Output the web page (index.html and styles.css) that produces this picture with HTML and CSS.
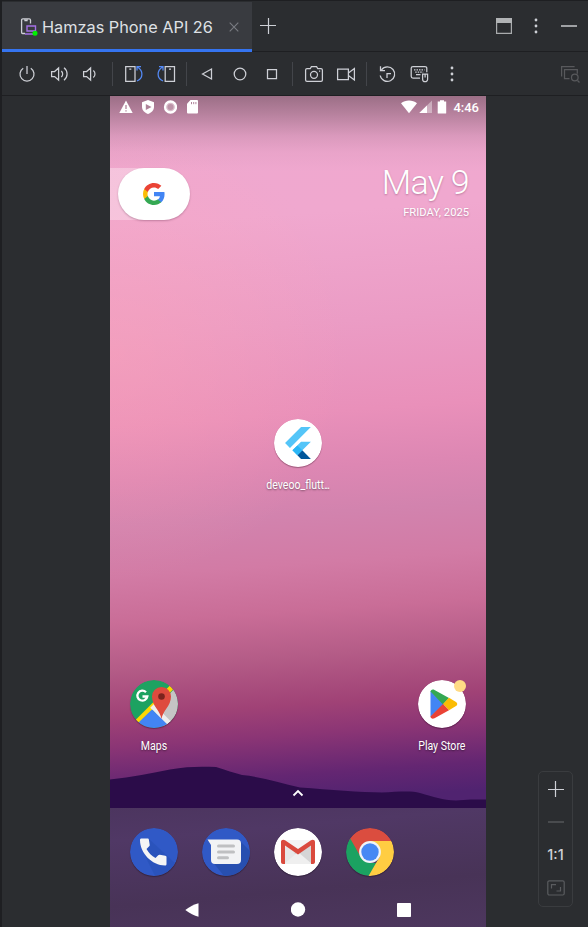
FILE: index.html
```html
<!DOCTYPE html>
<html lang="en">
<head>
<meta charset="utf-8">
<title>Running Devices</title>
<link rel="stylesheet" href="styles.css">
</head>
<body>
<div class="window">
  <header class="tabs">
    <div class="tab">
      <svg class="tab-icon" width="18" height="20" viewBox="0 0 18 20" fill="none"><path d="M5 16.500H2.600a1 1 0 0 1-1-1V3a1.200 1.200 0 0 1 1.200-1.200h6.500A1.200 1.200 0 0 1 10.500 3v3.500M5 2v1.700h2V2" stroke="#ced0d6" stroke-width="1.300"/><path d="M7 9h8.500v5H7zM5 17h8.500" stroke="#a571e6" stroke-width="1.400"/><circle cx="15" cy="16.300" r="2.500" fill="#00f200"/></svg>
      <span class="tab-title">Hamzas Phone API 26</span>
      <svg class="close" width="10" height="10" viewBox="0 0 10 10"><path d="M.7.7l8.600 8.600M9.300.7L.7 9.300" stroke="#7a7c82" stroke-width="1.100"/></svg>
    </div>
    <svg class="add" width="16" height="16" viewBox="0 0 16 16"><path d="M8.500 0v16M0 7.500h16" stroke="#ced0d6" stroke-width="1.200"/></svg>
    <div class="tab-tools">
      <svg width="16" height="16" viewBox="0 0 16 16"><path d="M.6.6h14.800v14.800H.6z" fill="none" stroke="#a9abad" stroke-width="1.200"/><path d="M0 0h16v5H0z" fill="#b1b3b5"/></svg>
      <svg width="4" height="16" viewBox="0 0 4 16" fill="#ced0d6"><circle cx="2" cy="2" r="1.400"/><circle cx="2" cy="8" r="1.400"/><circle cx="2" cy="14" r="1.400"/></svg>
      <svg width="16" height="16" viewBox="0 0 16 16"><path d="M0 8h16" stroke="#9fa1a4" stroke-width="2"/></svg>
    </div>
  </header>

  <nav class="toolbar">
    <svg class="tool" viewBox="0 0 24 24"><path d="M12 4v8M8.200 6.200a7 7 0 1 0 7.600 0"/></svg>
    <svg class="tool" viewBox="0 0 24 24"><path d="M4.600 9.500h3l4-3.500v12l-4-3.500h-3zM14.300 9a4 4 0 0 1 0 6M17 5.800a7.800 7.800 0 0 1 0 12.400"/></svg>
    <svg class="tool" viewBox="0 0 24 24"><path d="M4.600 9.500h3l4-3.500v12l-4-3.500h-3zM14.300 8.500a4.500 4.500 0 0 1 0 7"/></svg>
    <i class="sep"></i>
    <svg class="tool" viewBox="0 0 24 24"><path d="M3.700 4.600h9.300v14.800H3.700zM7.300 7h2"/><path class="blue" d="M15 19C21.500 16 21.500 8.500 15.200 5M19 4.600h-4v4"/></svg>
    <svg class="tool" viewBox="0 0 24 24"><path d="M11.200 4.600h9.300v14.800h-9.300zM15 7h2"/><path class="blue" d="M9 19C2.500 16 2.500 8.500 8.800 5M5 4.600h4v4"/></svg>
    <i class="sep narrow"></i>
    <svg class="tool" viewBox="0 0 24 24"><path d="M7.500 12l9-5v10z"/></svg>
    <svg class="tool" viewBox="0 0 24 24"><circle cx="13" cy="12" r="5.800"/></svg>
    <svg class="tool" viewBox="0 0 24 24"><path d="M8.500 7.500h9v9h-9z"/></svg>
    <i class="sep"></i>
    <svg class="tool" viewBox="0 0 24 24"><path d="M5 6.700h3.200l1.200-2h5.200l1.200 2H19A1.400 1.400 0 0 1 20.400 8v10a1.400 1.400 0 0 1-1.400 1.400H5A1.400 1.400 0 0 1 3.600 18V8A1.400 1.400 0 0 1 5 6.700z"/><circle cx="12" cy="12.800" r="3.500"/><path d="M17 9h1.200"/></svg>
    <svg class="tool" viewBox="0 0 24 24"><path d="M3.600 7h10.800v10.500H3.600zM14.400 11l6-4.500v11.500l-6-4.500"/></svg>
    <i class="sep narrow"></i>
    <svg class="tool" viewBox="0 0 24 24"><path d="M6.500 7.800a7.300 7.300 0 1 1-1.300 5.700M5.500 4.200v4.500h4.500M12 16v-4.400h4"/></svg>
    <svg class="tool" viewBox="0 0 24 24"><path d="M13 16H6a1.800 1.800 0 0 1-1.800-1.800V6.300A1.800 1.800 0 0 1 6 4.500h12a1.800 1.800 0 0 1 1.800 1.800v4"/><path stroke-dasharray="1.500 1" d="M7 7.800h10.500M8.200 10h8"/><path d="M9 12.700h4.500M15.600 12.200h5v5a2.500 2.500 0 0 1-5 0zM18.100 12.500v3"/></svg>
    <svg class="tool" viewBox="0 0 24 24"><g fill="#ced0d6" stroke="none"><circle cx="13" cy="6" r="1.400"/><circle cx="13" cy="12" r="1.400"/><circle cx="13" cy="18" r="1.400"/></g></svg>
    <svg class="tool last" viewBox="0 0 24 24"><path d="M3.600 14.500v-10h13M11.500 16.500h-5v-9h12.800v4.200M19.500 18.500l2 2"/><circle cx="16.800" cy="15.500" r="3.300"/></svg>
  </nav>

  <main class="stage">
    <section class="phone">
      <svg class="hills" width="376" height="42" viewBox="0 0 376 42"><path fill="#2b0c49" d="M0 13.500C22 11 42 7 60 3.500 78 .2 92 .5 106 1c10 3 18 6 26 8 20 2 38 8 58 12.500 30 2 60 5 82 5 16-.5 28-2 38 .5 14 4 22 7 36 7.500 10-.9 20-.9 30-.9V42H0z"/></svg>
      <div class="status">
        <svg width="14" height="14" viewBox="0 0 14 14"><path fill="#fff" d="M7 .5l6.700 12.500H.3z"/><path d="M7 5v4M7 10.200v1.300" stroke="#b0849b" stroke-width="1.300"/></svg>
        <svg width="14" height="14" viewBox="0 0 14 14"><path fill="#fff" d="M7 0l6 2.200v4.600c0 3.400-2.500 6-6 7.200C3.500 12.800 1 10.200 1 6.800V2.200z"/><path fill="#ae8399" d="M4.800 4l5.700 3-5.700 3z"/></svg>
        <svg width="14" height="14" viewBox="0 0 14 14"><circle cx="7.500" cy="7" r="5.500" fill="#d8bdca" stroke="#fff" stroke-width="2.300"/><circle cx="7.500" cy="7" r="3" fill="#bd94a8"/></svg>
        <svg width="14" height="14" viewBox="0 0 14 14"><path fill="#fff" d="M5.500 0H12a1 1 0 0 1 1 1v11.500a1 1 0 0 1-1 1H3a1 1 0 0 1-1-1V3.800z"/><path d="M6.500 2v2.200M8.700 2v2.200M10.900 2v2.200" stroke="#b0849b"/></svg>
        <span class="grow"></span>
        <svg class="wifi" width="16" height="14" viewBox="0 0 16 14"><path fill="#fff" d="M0 3.200C4.500-.4 11.500-.4 16 3.200L8 13.200z"/></svg>
        <svg class="signal" width="13" height="14" viewBox="0 0 13 14"><path fill="#fff" opacity=".4" d="M13 .5V13H.3z"/><path fill="#fff" d="M8 5.500V13H.3z"/></svg>
        <svg class="battery" width="10" height="14" viewBox="0 0 10 14"><path fill="#fff" d="M3 .3h4v1.200h2.200V13a.6.6 0 0 1-.6.600H1.300a.6.6 0 0 1-.6-.6V1.500H3z"/></svg>
        <span class="clock">4:46</span>
      </div>

      <div class="widgets">
        <div class="search-tail"><div class="search">
          <svg width="24" height="24" viewBox="0 0 24 24"><path fill="#4285f4" d="M22.560 12.250c0-.78-.07-1.530-.2-2.250H12v4.260h5.920c-.26 1.370-1.040 2.530-2.210 3.310v2.770h3.570c2.080-1.920 3.280-4.740 3.280-8.090z"/><path fill="#34a853" d="M12 23c2.970 0 5.460-.98 7.280-2.660l-3.570-2.770c-.98.66-2.230 1.060-3.710 1.060-2.860 0-5.290-1.930-6.160-4.530H2.180v2.840C3.990 20.530 7.700 23 12 23z"/><path fill="#fbbc05" d="M5.840 14.090c-.22-.66-.35-1.360-.35-2.090s.13-1.430.35-2.090V7.070H2.180C1.430 8.550 1 10.220 1 12s.43 3.450 1.180 4.930l2.850-2.220.81-.62z"/><path fill="#ea4335" d="M12 5.380c1.620 0 3.060.56 4.210 1.640l3.150-3.150C17.450 2.090 14.970 1 12 1 7.700 1 3.990 3.470 2.180 7.070l3.660 2.840c.87-2.600 3.300-4.530 6.160-4.530z"/></svg>
        </div></div>
        <div class="date"><div class="day">May 9</div><div class="weekday">FRIDAY, 2025</div></div>
      </div>

      <div class="apps center">
        <div class="app">
          <svg class="icon" viewBox="0 0 48 48"><circle cx="24" cy="24" r="24" fill="#fff"/><g transform="translate(8 8) scale(1.330)"><path fill="#54c5f8" d="M14.314 0L2.300 12 6 15.700 21.684 0zM14.328 11.072L7.857 17.530l3.700 3.700L21.700 11.072z"/><path fill="#01579b" d="M11.557 21.230L14.327 24H21.700l-6.460-6.468z"/><path fill="#29b6f6" d="M7.857 17.530l3.700-3.700 3.683 3.702-3.683 3.700z"/></g></svg>
          <span class="label">deveoo_flutt<span class="dots">...</span></span>
        </div>
      </div>

      <div class="apps lower">
        <div class="app">
          <svg class="icon" viewBox="0 0 48 48"><defs><clipPath id="disc"><circle cx="24" cy="24" r="24"/></clipPath></defs><g clip-path="url(#disc)"><path fill="#1da261" d="M0 0h48v48H0z"/><path fill="#c5c5c5" d="M48 5v43H34L24 30z"/><path d="M4 45L44 5" stroke="#fdd900" stroke-width="5"/><path d="M22 26l20 20" stroke="#eee" stroke-width="5"/><path fill="#4285f4" d="M8 43l14-13.500L40 47v3H8z"/></g><path fill="none" stroke="#fff" stroke-width="2.300" d="M16 12.200a5 5 0 1 0 1.300 4.300H12.500"/><path fill="#de4b3e" d="M31.500 39c-1-8-9.500-13-9.500-22.500a9.500 9.500 0 0 1 19 0C41 26 32.500 31 31.500 39z"/><circle cx="31.500" cy="16.500" r="3.300" fill="#7b231d"/></svg>
          <span class="label">Maps</span>
        </div>
        <div class="app">
          <svg class="icon" viewBox="0 0 48 48"><circle cx="24" cy="24" r="24" fill="#fff"/><path fill="#4285f4" d="M12.500 11v26L26 24z"/><path fill="#34a853" d="M12.500 12c0-2.200 2-3.200 4-2.100L31 18l-6 6.500L12.500 11.500z"/><path fill="#fbbc04" d="M31 17.800l7 4.100c1.700 1 1.700 3.200 0 4.200l-7 4.100-6-6.200z"/><path fill="#ea4335" d="M12.500 36.500L25 24l6 6.200-14.500 8c-2 1.100-4 .1-4-1.700z"/></svg><i class="badge"></i>
          <span class="label">Play Store</span>
        </div>
      </div>

      <svg class="chevron" width="12" height="8" viewBox="0 0 12 8"><path d="M1.500 6.500L6 2l4.500 4.500" fill="none" stroke="#fff" stroke-width="1.800"/></svg>

      <div class="dock">
        <div class="favorites">
          <svg class="icon" viewBox="0 0 48 48"><circle cx="24" cy="24" r="24" fill="#3059c6"/><path fill="#2750b5" d="M19 11l27 25c-4 7-11 12-21 12L15 28z" opacity=".6" clip-path="url(#disc)"/><path fill="#f5f5f5" d="M10 12c0-1 .5-1.500 1.500-1.500h6c.8 0 1.300.4 1.400 1.200l.8 5c.1.700-.1 1.200-.5 1.600l-2.700 2.700c2.300 4 5 6.700 9 9l2.700-2.700c.4-.4 1-.6 1.600-.5l5.500.9c.8.100 1.200.6 1.200 1.400V36c0 1-.6 1.500-1.500 1.500C22 37.500 10 25 10 12z"/></svg>
          <svg class="icon" viewBox="0 0 48 48"><circle cx="24" cy="24" r="24" fill="#3059c6"/><path fill="#244ca8" clip-path="url(#disc)" d="M38 13l10 10v25H22L10 33z" opacity=".75"/><path fill="#f2f3f5" d="M5.500 11.500H35a4 4 0 0 1 4 4V32a4 4 0 0 1-4 4H13a4 4 0 0 1-4-4V17z"/><path d="M16.500 18h15M16.500 24h15M16.500 29.700h9" stroke="#bfc0c2" stroke-width="3" stroke-linecap="round"/></svg>
          <svg class="icon" viewBox="0 0 48 48"><circle cx="24" cy="24" r="24" fill="#fff"/><path fill="#e7e7e8" d="M8 12h32v24H8z"/><path fill="#d5d5d6" d="M40 14v22H31L20 25z"/><path fill="#efefef" d="M10 36l14-12 14 12z"/><path fill="#f4f4f4" d="M10 12h28L24 22z"/><path fill="#da4a3e" d="M7 14c0-2.200 2.200-3 4-1.800L24 21l13-8.800c1.800-1.200 4-.4 4 1.800v20c0 1.200-.8 2-2 2h-2V17.500L24 26.500l-13-9V36H9c-1.200 0-2-.8-2-2z"/></svg>
          <svg class="icon" viewBox="0 0 48 48"><g clip-path="url(#disc)"><path fill="#db4d3f" d="M0 0h48v13.500H24L14 30 3 12z"/><path fill="#1ba261" d="M0 8l4.500 3L15 29.500 24 35h6.500L22.500 49H0z"/><path fill="#ffcd42" d="M24 13h24v35H22.500l11-19z"/></g><circle cx="24" cy="24" r="10.900" fill="#f2f4f7"/><circle cx="24" cy="24" r="8.700" fill="#4688f4"/></svg>
        </div>
        <div class="nav">
          <svg width="14" height="14" viewBox="0 0 14 14"><path fill="#fff" d="M13.500.3v13.500c-4-1-9-3.500-13.200-6.700C4.500 3.800 9.500 1 13.500.300z"/></svg>
          <svg width="15" height="15" viewBox="0 0 15 15"><circle cx="7" cy="7.500" r="7.200" fill="#fff"/></svg>
          <svg width="14" height="14" viewBox="0 0 14 14"><rect width="14" height="14" rx=".8" fill="#fff"/></svg>
        </div>
      </div>
    </section>

    <aside class="zoom">
      <svg width="16" height="16" viewBox="0 0 16 16"><path d="M7.500 0v16M0 8.500h16" stroke="#ced0d6" stroke-width="1.200"/></svg>
      <svg width="16" height="2" viewBox="0 0 16 2"><path d="M0 1h16" stroke="#5e6063" stroke-width="1.200"/></svg>
      <span class="ratio">1:1</span>
      <svg class="fit" width="18" height="16" viewBox="0 0 18 16" fill="none" stroke="#5a5c5f" stroke-width="1.200"><rect x=".8" y=".8" width="16.400" height="14.200" rx="1.500"/><path d="M4.500 8.500V4.700H9M13.500 7v4H9.500"/></svg>
    </aside>
  </main>
</div>
</body>
</html>
```
FILE: styles.css
```css
* { box-sizing: border-box; }
body { margin: 0; background: #2b2d30; font-family: Roboto, sans-serif; }
svg { display: block; flex: none; }
.window {
  width: 588px; height: 927px; overflow: hidden;
  display: flex; flex-direction: column;
  border-left: 2px solid #1e1f22; border-top: 1px solid #1e1f22;
}

.tabs { height: 51px; display: flex; align-items: center; border-bottom: 1px solid #1e1f22; flex: none; }
.tab {
  width: 250px; height: 51px; margin-top: 1px; padding: 2px 13px 0 18px;
  display: flex; align-items: center;
  background: #393b40; border-bottom: 3px solid #3574f0; border-top: 1px solid #2b2d30;
}
.tab-title { margin-left: 4px; font: 16.300px/24px Inter, sans-serif; color: #dfe1e5; white-space: nowrap; }
.close { margin-left: auto; }
.add { margin-left: 8px; }
.tab-tools { margin-left: auto; margin-right: 11px; display: flex; align-items: center; gap: 23px; }
.tab-tools svg:first-child { margin-right: -1px; }

.toolbar { height: 44px; padding: 0 6px 0 13px; display: flex; align-items: center; gap: 8px; border-bottom: 1px solid #1e1f22; flex: none; }
.tool { width: 24px; height: 24px; fill: none; stroke: #ced0d6; stroke-width: 1.25; }
.tool .blue { stroke: #548af7; }
.tool.last { margin-left: auto; stroke: #58595c; }
.sep { width: 1px; height: 24px; margin: 0 1px; background: #43454a; flex: none; }
.sep.narrow { margin: 0; }

.stage { flex: 1; display: flex; align-items: flex-end; padding-left: 108px; }
.phone {
  position: relative; width: 376px; height: 831px; display: flex; flex-direction: column; color: #fff;
  background:
    linear-gradient(180deg, rgba(30,25,25,.4) 0, rgba(30,25,25,.27) 18px, rgba(30,25,25,.1) 40px, rgba(30,25,25,.03) 56px, rgba(30,25,25,0) 76px),
    radial-gradient(ellipse 240px 230px at 0 255px, rgba(255,165,180,.4), rgba(255,165,180,.2) 50%, rgba(255,165,180,0)),
    linear-gradient(176deg, #efa8cf 0, #f0a8cf 130px, #eb9cc5 240px, #e990ba 330px, #dd87b3 385px, #d283ae 430px, #d27ba5 480px, #c96d97 527px, #b45c87 572px, #a04276 620px, #8b3575 650px, #642672 690px, #502370 718px);
}
.hills { position: absolute; left: 0; top: 670px; }
.status { height: 22px; padding: 0 7px 0 9px; display: flex; align-items: center; gap: 8px; }
.grow { flex: 1; }
.wifi { margin-right: 1px; }
.signal { margin-left: -7px; margin-right: 1px; }
.battery { margin-left: -4px; }
.clock { font-size: 13px; font-weight: 500; line-height: 23px; margin-left: -2px; }

.widgets { height: 52px; margin-top: 50px; display: flex; justify-content: space-between; }
.search-tail { width: 54px; padding-left: 8px; background: linear-gradient(90deg, rgba(255,255,255,.32) 65%, transparent 65%); }
.search { width: 72px; height: 52px; border-radius: 26px; background: #fff; display: flex; align-items: center; justify-content: center; box-shadow: 0 1px 2px rgba(80,30,60,.3); }
.date { padding-right: 17px; text-align: right; text-shadow: 0 1px 2px rgba(80,30,60,.35); }
.day { font-size: 34px; font-weight: 300; line-height: 28px; letter-spacing: -.7px; }
.weekday { font-size: 11.200px; line-height: 14px; margin-top: 10px; }

.apps { display: flex; padding: 0 8px; }
.apps.center { justify-content: center; margin-top: 199px; }
.apps.lower { justify-content: space-between; margin-top: 183px; }
.app { width: 72px; height: 78px; position: relative; display: flex; flex-direction: column; align-items: center; }
.icon { width: 48px; height: 48px; border-radius: 50%; box-shadow: 0 1px 1px rgba(0,0,0,.3); }
.label { margin-top: 11px; font-size: 12px; line-height: 14px; white-space: nowrap; transform: scaleX(.88); text-shadow: 0 1px 2px rgba(0,0,0,.45); }
.dots { letter-spacing: -1.300px; }
.badge { position: absolute; right: 12px; top: 0; width: 12px; height: 12px; border-radius: 50%; background: #ffdb85; }
.chevron { position: relative; margin: 31px auto 0; }

.dock { height: 119px; margin-top: auto; padding: 20px 8px 0; background: linear-gradient(175deg, #4c355f 0, #503865 22%, #483357 65%, #4d375e 100%); }
.favorites { display: flex; gap: 24px; padding-left: 12px; }
.nav { display: flex; align-items: center; justify-content: space-between; padding: 0 67px; height: 15px; margin-top: 26px; }

.zoom {
  width: 35px; height: 136px; margin: 0 0 20px 52px; padding-top: 9px;
  border: 1px solid #3a3c3f; border-radius: 5px;
  display: flex; flex-direction: column; align-items: center;
}
.zoom svg + svg { margin-top: 24px; }
.ratio { margin-top: 22px; font: 500 14.500px/20px Inter, sans-serif; color: #ced0d6; }
.fit { margin-top: 15px; }
```
